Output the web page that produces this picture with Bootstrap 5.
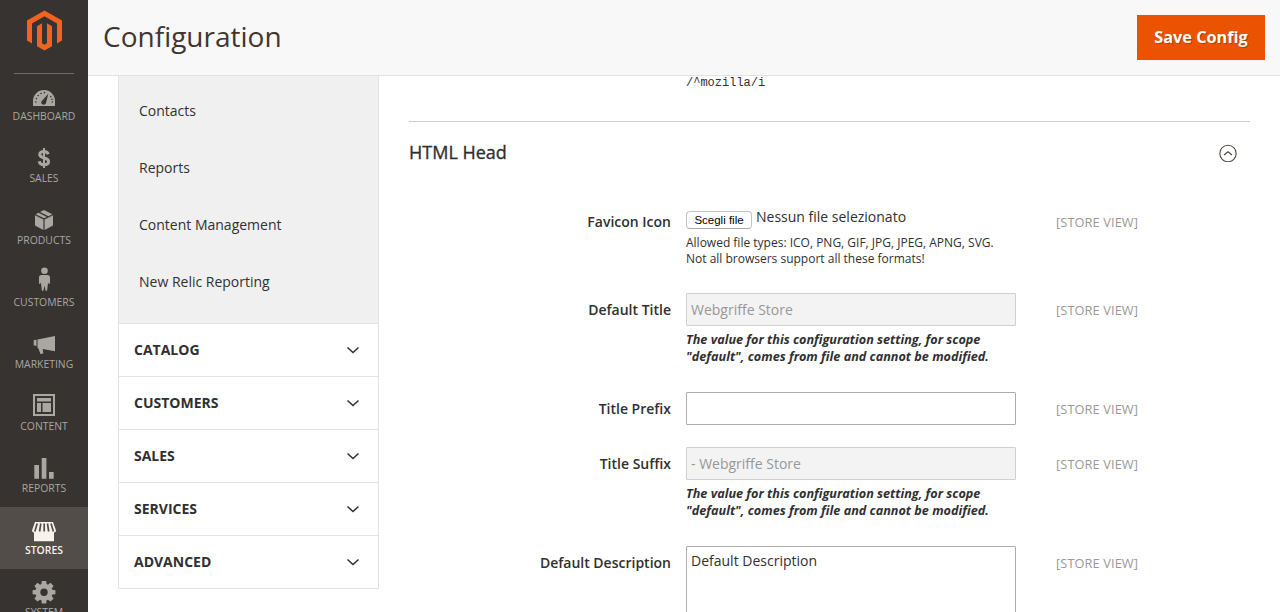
<!DOCTYPE html>
<html lang="en">
<head>
<meta charset="utf-8">
<meta name="viewport" content="width=device-width, initial-scale=1">
<title>Configuration</title>
<link href="https://cdn.jsdelivr.net/npm/bootstrap@5.3.0/dist/css/bootstrap.min.css" rel="stylesheet">
<style>
body{font-family:"Open Sans",sans-serif;font-size:14px;line-height:19px;color:#303030;background:#fff}
.shell{height:100vh}
.side-menu{width:88px;background:#373330}
.logo-box{height:73px;padding:10px 0 0 26px}
.menu-rule{width:60px;height:1px;margin:0 auto -1px;background:#736963}
.menu-entry{height:62px;color:#aaa6a0;font-size:10.4px;line-height:14px;text-decoration:none;flex:none}
.menu-entry svg{display:block;width:40px;height:36px;fill:currentColor}
.menu-entry.current{background:#524d49;color:#f7f3eb;font-weight:600}
.page-bar{height:76px;background:#f8f8f8;border-bottom:1px solid #e3e3e3;padding:0 15px;flex:none}
.page-bar h1{font-size:28px;line-height:36px;color:#41362f;font-weight:400;margin:-4px 0 0}
.btn-save{background:#eb5202;color:#fff;border:0;border-radius:0;width:128px;height:45px;font-size:16.3px;font-weight:700;padding:0;text-shadow:1px 1px 0 rgba(0,0,0,.25)}
.btn-save:hover{background:#ba4000;color:#fff}
.config-nav{width:261px;margin-left:30px;flex:none;border:1px solid #e3e3e3;border-top:0;align-self:flex-start}
.sub-links{background:#f0f0f0;height:247px;padding:6px 20px 0}
.sub-links a{display:flex;align-items:center;height:57px;color:#303030;text-decoration:none}
.nav-group{height:53px;border-top:1px solid #e3e3e3;padding:0 18px 0 15px;font-weight:700}
.nav-group span{padding-bottom:2px}
.settings{width:841px;margin-left:30px;flex:none}
.prev-value{font:12px/14px "Liberation Mono",monospace;height:45px;padding-left:277px}
.section-head{height:84px;border-top:1px solid #ccc;padding:0 13px 21px 0}
.section-head h2{font-size:18px;line-height:24px;font-weight:500;margin:0;padding-bottom:2px;-webkit-text-stroke:.35px currentColor}
.setting{display:grid;grid-template-columns:262px 330px 1fr;column-gap:15px;margin-bottom:22px}
.setting label{font-weight:600;text-align:right;padding-top:7px}
.scope{font-size:12.8px;color:#999;padding:8px 0 0 25px;letter-spacing:.1px}
.setting .form-control{height:33px;border:1px solid #adadad;border-radius:1px;padding:0 4px;font-size:14px;line-height:19px;color:#303030;background:#fff}
.setting .form-control:disabled{background:#f3f3f3;border-color:#d0d0d0;color:#989898}
.setting textarea.form-control{height:90px;padding-top:4px;resize:none}
.upload-field{height:66px}
.file-status{padding-top:2px}
.hint{font-size:12px;line-height:16px;margin-top:6px}
.locked{font-size:12.65px;line-height:17px;font-weight:700;font-style:italic;padding:5px 0;white-space:nowrap}
.btn-file{border:1px solid #c3c3c3;border-bottom-color:#aaa;border-radius:4px;background:#fff;color:#000;font:11.500px/16px "Liberation Sans",Arial,sans-serif;width:66px;height:18px;padding:0;margin:6px 4px 0 0}
</style>
</head>
<body class="overflow-hidden">
<div class="shell d-flex overflow-hidden">
  <nav class="side-menu d-flex flex-column flex-shrink-0 overflow-hidden">
    <div class="logo-box flex-shrink-0">
      <svg class="d-block" width="37" height="42" viewBox="26 10 37 42" fill="#f26322"><path d="M44.5 10.5 62 20.5v20l-5 3V23.4L44.5 16.2 32 23.4v20.1l-5-3v-20z"/><path d="M42 23.3 37 26.2V46.2l7.5 4.4 7.5-4.4v-20l-5-2.9v20l-2.5 1.5-2.5-1.5z"/></svg>
    </div>
    <div class="menu-rule flex-shrink-0"></div>
    <a href="#" class="menu-entry d-flex flex-column align-items-center">
      <svg viewBox="0 0 40 36"><path fill-rule="evenodd" d="M9 33v-5a11 11 0 0 1 22 0v5zM24.300 20.700 18.300 27.400a2.400 2.400 0 1 0 3.700 2.500z"/><g fill="#373330"><circle cx="11.800" cy="29" r=".8"/><circle cx="12.400" cy="25.600" r=".8"/><circle cx="14.200" cy="22.500" r=".8"/><circle cx="17" cy="20.500" r=".8"/><circle cx="20.500" cy="19.600" r=".8"/><circle cx="26.800" cy="23.600" r=".8"/><circle cx="28" cy="26.300" r=".8"/><circle cx="28.300" cy="29" r=".8"/></g></svg>
      <span>DASHBOARD</span></a>
    <a href="#" class="menu-entry d-flex flex-column align-items-center">
      <svg viewBox="0 0 40 36"><path fill="none" stroke="currentColor" stroke-width="3" d="M24.200 19.200C23.600 17.300 22 16.500 20 16.500c-2.500 0-4.300 1.200-4.300 3.100 0 4.500 8.900 2.400 8.900 6.900 0 2-1.900 3.300-4.600 3.300-2.600 0-4.400-1.200-4.800-3.500"/><path d="M19 13h2v20h-2z"/></svg>
      <span>SALES</span></a>
    <a href="#" class="menu-entry d-flex flex-column align-items-center">
      <svg viewBox="0 0 40 36"><path d="M11 18.300 19.400 22.400V33L11 28.600zM29 18.300 20.600 22.400V33L29 28.600zM11.600 17.200 14.600 15.700 22.900 19.900 20 21.300zM16 15 20 13l8.400 4.200-4 2z"/></svg>
      <span>PRODUCTS</span></a>
    <a href="#" class="menu-entry d-flex flex-column align-items-center">
      <svg viewBox="0 0 40 36"><circle cx="20.500" cy="11.700" r="3.300"/><path d="M17.500 16h6c1.700 0 2.500 1 2.500 2.600v5.500c0 1.200-1.200 1.300-1.600.2l-.3-1-1 8.500h-1.500l-1.100-5-1.100 5h-1.500l-1-8.500-.3 1c-.4 1.100-1.600 1-1.600-.2v-5.500c0-1.600.8-2.600 2.500-2.600z"/></svg>
      <span>CUSTOMERS</span></a>
    <a href="#" class="menu-entry d-flex flex-column align-items-center">
      <svg viewBox="0 0 40 36"><path d="M9.700 19.800q0-.6.600-.7l2.200-.4v6.200l-2.200-.3q-.6-.1-.6-.7zM13.500 18.600 31 15.100v15.200l-12.300-2.200.6 4.200-2.700.9-2.300-6-.8-.2z"/></svg>
      <span>MARKETING</span></a>
    <a href="#" class="menu-entry d-flex flex-column align-items-center">
      <svg viewBox="0 0 40 36"><path fill-rule="evenodd" d="M9 11h22v22H9zM11 13v18h18V13zM13 15h14v3.500H13zM13 20h4v9h-4zM18.500 20H27v9h-8.500z"/></svg>
      <span>CONTENT</span></a>
    <a href="#" class="menu-entry d-flex flex-column align-items-center">
      <svg viewBox="0 0 40 36"><path d="M10.300 20H15v13.700h-4.700zM17.700 13h4.700v20.700h-4.700zM25 27h4.700v6.700H25z"/></svg>
      <span>REPORTS</span></a>
    <a href="#" class="menu-entry current d-flex flex-column align-items-center">
      <svg viewBox="0 0 40 36"><path d="M11 15h18l3 8.600q0 2-2 2v8.600H10v-8.600q-2 0-2-2z"/><g fill="none" stroke="#524d49" stroke-width="1.700"><path d="m13.200 16.500-2.400 8M16.800 16.500l-1.200 8M20.200 16.500v8M23.500 16.500l1.200 8M27 16.500l2.400 8"/></g></svg>
      <span>STORES</span></a>
    <a href="#" class="menu-entry d-flex flex-column align-items-center">
      <svg viewBox="0 0 40 36"><path fill-rule="evenodd" d="M17.800 12h4.400l.4 3.100 1.400.6 2.500-1.900 3.100 3.100-1.900 2.500.6 1.400 3.100.4v4l-3.100.4-.6 1.400 1.900 2.500-3.100 3.100-2.500-1.900-1.400.6-.4 3.100h-4.400l-.4-3.100-1.400-.6-2.500 1.900-3.100-3.100 1.900-2.500-.6-1.400-3.100-.4v-4l3.100-.4.6-1.400-1.900-2.500 3.100-3.100 2.500 1.900 1.400-.6zM20 19.500a3.700 3.700 0 1 0 0 7.400 3.700 3.700 0 0 0 0-7.400z"/></svg>
      <span>SYSTEM</span></a>
  </nav>

  <main class="flex-grow-1 d-flex flex-column overflow-hidden">
    <header class="page-bar d-flex align-items-center justify-content-between">
      <h1>Configuration</h1>
      <button type="button" class="btn btn-save">Save Config</button>
    </header>
    <div class="d-flex overflow-hidden flex-grow-1">
      <aside class="config-nav">
        <div class="sub-links">
          <a href="#">Contacts</a><a href="#">Reports</a><a href="#">Content Management</a><a href="#">New Relic Reporting</a>
        </div>
        <div class="nav-group d-flex align-items-center justify-content-between"><span>CATALOG</span><svg width="14" height="8" viewBox="0 0 14 8" fill="none" stroke="#303030" stroke-width="1.500"><path d="m1.500 1.500 5.500 5L12.500 1.500"/></svg></div>
        <div class="nav-group d-flex align-items-center justify-content-between"><span>CUSTOMERS</span><svg width="14" height="8" viewBox="0 0 14 8" fill="none" stroke="#303030" stroke-width="1.500"><path d="m1.500 1.500 5.500 5L12.500 1.500"/></svg></div>
        <div class="nav-group d-flex align-items-center justify-content-between"><span>SALES</span><svg width="14" height="8" viewBox="0 0 14 8" fill="none" stroke="#303030" stroke-width="1.500"><path d="m1.500 1.500 5.500 5L12.500 1.500"/></svg></div>
        <div class="nav-group d-flex align-items-center justify-content-between"><span>SERVICES</span><svg width="14" height="8" viewBox="0 0 14 8" fill="none" stroke="#303030" stroke-width="1.500"><path d="m1.500 1.500 5.500 5L12.500 1.500"/></svg></div>
        <div class="nav-group d-flex align-items-center justify-content-between"><span>ADVANCED</span><svg width="14" height="8" viewBox="0 0 14 8" fill="none" stroke="#303030" stroke-width="1.500"><path d="m1.500 1.500 5.500 5L12.500 1.500"/></svg></div>
      </aside>

      <section class="settings">
        <div class="prev-value">/^mozilla/i</div>
        <div class="section-head d-flex align-items-center justify-content-between">
          <h2>HTML Head</h2>
          <svg width="18" height="18" viewBox="0 0 18 18" fill="none" stroke="#514943"><circle cx="9" cy="9.500" r="8.200" stroke-width="1.100"/><path stroke-width="1.300" d="M5 11.100 9 7.800l4 3.300"/></svg>
        </div>
        <div class="setting">
          <label>Favicon Icon</label>
          <div class="upload-field">
            <div class="d-flex align-items-start"><button type="button" class="btn-file">Scegli file</button><span class="file-status">Nessun file selezionato</span></div>
            <div class="hint">Allowed file types: ICO, PNG, GIF, JPG, JPEG, APNG, SVG.<br>Not all browsers support all these formats!</div>
          </div>
          <div class="scope">[STORE VIEW]</div>
        </div>
        <div class="setting">
          <label for="title">Default Title</label>
          <div><input id="title" class="form-control" value="Webgriffe Store" disabled>
            <div class="locked">The value for this configuration setting, for scope<br>"default", comes from file and cannot be modified.</div></div>
          <div class="scope">[STORE VIEW]</div>
        </div>
        <div class="setting">
          <label for="prefix">Title Prefix</label>
          <div><input id="prefix" class="form-control"></div>
          <div class="scope">[STORE VIEW]</div>
        </div>
        <div class="setting">
          <label for="suffix">Title Suffix</label>
          <div><input id="suffix" class="form-control" value="- Webgriffe Store" disabled>
            <div class="locked">The value for this configuration setting, for scope<br>"default", comes from file and cannot be modified.</div></div>
          <div class="scope">[STORE VIEW]</div>
        </div>
        <div class="setting">
          <label for="desc">Default Description</label>
          <div><textarea id="desc" class="form-control">Default Description</textarea></div>
          <div class="scope">[STORE VIEW]</div>
        </div>
      </section>
    </div>
  </main>
</div>
<script src="https://cdn.jsdelivr.net/npm/bootstrap@5.3.0/dist/js/bootstrap.bundle.min.js"></script>
</body>
</html>
